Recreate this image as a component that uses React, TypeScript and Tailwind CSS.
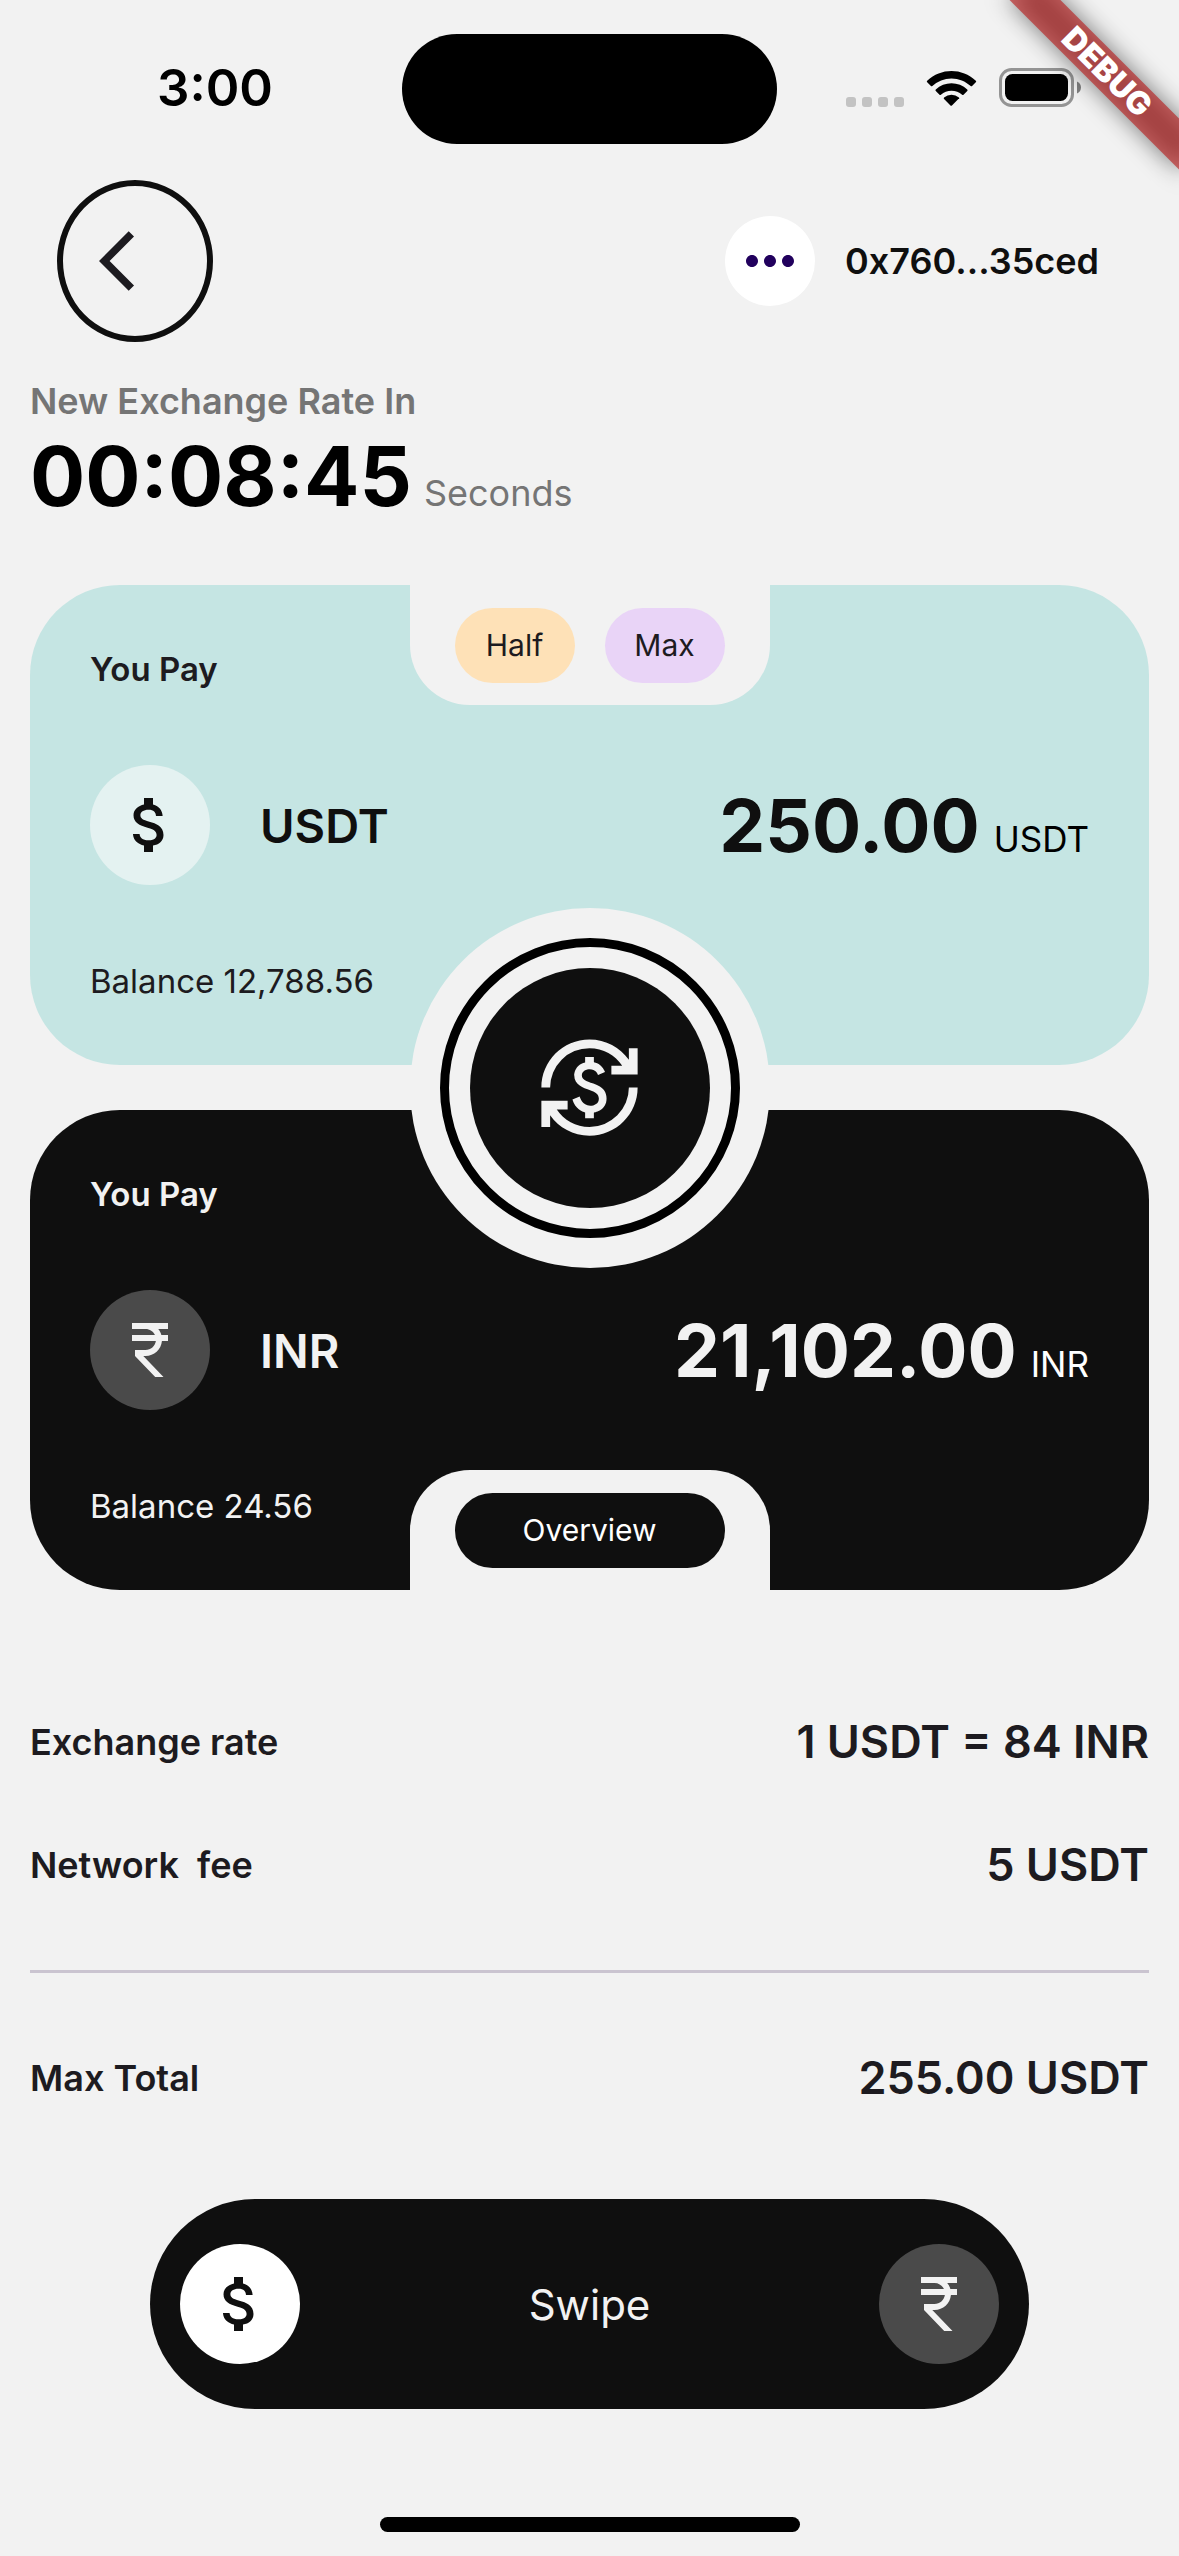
import type { ReactNode } from "react";
import {
  MdArrowBackIos,
  MdAttachMoney,
  MdCurrencyExchange,
  MdCurrencyRupee,
  MdMoreHoriz,
} from "react-icons/md";

function SignalDots() {
  return (
    <div className="flex gap-1.5">
      {[0, 1, 2, 3].map((i) => (
        <span key={i} className="size-2.5 rounded-[3px] bg-[#c3c3c3]" />
      ))}
    </div>
  );
}

function WifiIcon() {
  return (
    <svg viewBox="0 0 17 12" className="h-9 w-[51px]" fill="#000" aria-hidden="true">
      <path d="M8.5 2.46c2.38 0 4.67.92 6.39 2.56.13.13.34.12.47 0l1.24-1.26a.34.34 0 0 0 0-.49c-4.53-4.36-11.67-4.36-16.2 0a.34.34 0 0 0 0 .49L1.64 5.02c.13.13.34.13.47 0A9.26 9.26 0 0 1 8.5 2.46Z" />
      <path d="M8.5 6.55c1.31 0 2.57.49 3.54 1.37.13.13.34.12.47 0l1.24-1.26a.35.35 0 0 0 0-.5 7.64 7.64 0 0 0-10.49 0 .35.35 0 0 0 0 .5l1.24 1.26c.13.12.34.13.47 0A5.27 5.27 0 0 1 8.5 6.55Z" />
      <path d="M10.98 9.3a.34.34 0 0 0-.01-.5 3.83 3.83 0 0 0-4.94 0 .34.34 0 0 0-.01.5l2.14 2.17c.13.13.34.13.48 0l2.14-2.17Z" />
    </svg>
  );
}

function BatteryIcon() {
  return (
    <svg viewBox="0 0 82 39" className="h-[39px] w-[82px]" aria-hidden="true">
      <rect x="1.5" y="1.5" width="72" height="36" rx="11" fill="none" stroke="#949494" strokeWidth="3" />
      <rect x="6" y="6" width="63" height="27" rx="7.5" fill="#000" />
      <path d="M78 13.5v12c2.400-1 4-3.300 4-6s-1.600-5-4-6Z" fill="#808080" />
    </svg>
  );
}

function StatusBar() {
  return (
    <div className="grid grid-cols-[1fr_375px_1fr] items-center py-[34px]">
      <div className="flex justify-center pb-1 pl-7 text-[51px] leading-none font-semibold text-black">
        3:00
      </div>
      <div className="h-[110px] rounded-full bg-black" />
      <div className="flex items-end justify-end gap-[22px] pr-[98px] pb-1">
        <SignalDots />
        <WifiIcon />
        <BatteryIcon />
      </div>
    </div>
  );
}

function DebugRibbon() {
  return (
    <div className="pointer-events-none absolute top-0 right-0 size-[220px] overflow-hidden">
      <div className="absolute top-[54px] -right-12 h-9 w-60 rotate-45">
        <div className="absolute inset-0 bg-black/50 blur-[12px]" />
        <div className="absolute inset-0 flex items-center justify-center bg-[#b71c1c]/63 text-[32px] leading-none font-black text-white">
          DEBUG
        </div>
      </div>
    </div>
  );
}

function Coin({ className, children }: { className: string; children: ReactNode }) {
  return (
    <span className={`flex size-[120px] shrink-0 items-center justify-center rounded-full ${className}`}>
      {children}
    </span>
  );
}

type CurrencyCardProps = {
  tone: string;
  coin: ReactNode;
  code: string;
  codeTone: string;
  amount: string;
  unitTone: string;
  balance: string;
  children: ReactNode;
};

function CurrencyCard({ tone, coin, code, codeTone, amount, unitTone, balance, children }: CurrencyCardProps) {
  return (
    <section className={`relative flex flex-col gap-[72px] rounded-[90px] p-[60px] ${tone}`}>
      <h2 className="text-[33px] leading-[48px] font-semibold">You Pay</h2>
      <div className="flex items-center">
        {coin}
        <span className={`ml-[50px] text-[47px] leading-none font-semibold ${codeTone}`}>{code}</span>
        <div className="ml-auto flex items-baseline gap-3.5">
          <span className={`text-[73px] leading-none font-bold ${codeTone}`}>{amount}</span>
          <span className={`text-[35px] leading-none ${unitTone}`}>{code}</span>
        </div>
      </div>
      <p className="text-[33px] leading-[48px]">Balance {balance}</p>
      {children}
    </section>
  );
}

function DetailRow({ label, value }: { label: string; value: string }) {
  return (
    <div className="flex items-center justify-between text-[#1d1b20]">
      <dt className="text-[36px] leading-[60px] font-semibold whitespace-pre">{label}</dt>
      <dd className="text-[45px] leading-[60px] font-semibold">{value}</dd>
    </div>
  );
}

export default function App() {
  return (
    <div className="relative flex min-h-screen flex-col overflow-hidden bg-[#f2f2f2] font-['Inter',sans-serif] [font-optical-sizing:none]">
      <StatusBar />

      <header className="mt-0.5 flex items-center justify-between pr-[60px] pl-[57px]">
        <button
          type="button"
          aria-label="Back"
          className="flex h-[162px] w-[156px] items-center justify-center rounded-[50%] border-[6px] border-[#0f0f0f] text-[#1d1b20]"
        >
          <MdArrowBackIos size={72} />
        </button>
        <div className="flex items-center gap-[30px]">
          <button
            type="button"
            aria-label="More options"
            className="flex size-[90px] items-center justify-center rounded-full bg-white text-[#21005d]"
          >
            <MdMoreHoriz size={72} />
          </button>
          <span className="min-w-[274px] text-[36px] leading-[48px] font-semibold text-[#0f0f0f]">
            0x760...35ced
          </span>
        </div>
      </header>

      <main className="flex flex-col px-[30px]">
        <p className="mt-[35px] text-[36px] leading-[48px] font-semibold text-[#757575]">New Exchange Rate In</p>
        <div className="mt-1 flex items-baseline gap-3">
          <span className="text-[82px] leading-[96px] font-bold text-black">00:08:45</span>
          <span className="text-[36px] text-[#757575]">Seconds</span>
        </div>

        <div className="relative mt-[60px] flex flex-col gap-[45px]">
          <CurrencyCard
            tone="bg-[#c5e5e3] text-[#1d1b20]"
            coin={
              <Coin className="bg-[#e4f2f1] text-[#0f0f0f]">
                <MdAttachMoney size={72} />
              </Coin>
            }
            code="USDT"
            codeTone="text-[#0f0f0f]"
            amount="250.00"
            unitTone="text-black"
            balance="12,788.56"
          >
            <div className="absolute top-0 left-1/2 flex h-[120px] w-[360px] -translate-x-1/2 items-center justify-center gap-[30px] rounded-b-[60px] bg-[#f2f2f2]">
              <button type="button" className="h-[75px] w-[120px] rounded-full bg-[#fee1b7] text-[30px]">
                Half
              </button>
              <button type="button" className="h-[75px] w-[120px] rounded-full bg-[#e9d4f7] text-[30px]">
                Max
              </button>
            </div>
          </CurrencyCard>

          <CurrencyCard
            tone="bg-[#0f0f0f] text-[#f2f2f2]"
            coin={
              <Coin className="bg-[#4a4a4a] text-[#f2f2f2]">
                <MdCurrencyRupee size={72} />
              </Coin>
            }
            code="INR"
            codeTone="text-[#f2f2f2]"
            amount="21,102.00"
            unitTone="text-white"
            balance="24.56"
          >
            <div className="absolute bottom-0 left-1/2 flex h-[120px] w-[360px] -translate-x-1/2 items-center justify-center rounded-t-[60px] bg-[#f2f2f2]">
              <button type="button" className="h-[75px] w-[270px] rounded-full bg-[#0f0f0f] text-[30px] text-white">
                Overview
              </button>
            </div>
          </CurrencyCard>

          <div className="absolute top-1/2 left-1/2 flex size-[360px] -translate-x-1/2 -translate-y-1/2 items-center justify-center rounded-full bg-[#f2f2f2]">
            <div className="flex size-[300px] items-center justify-center rounded-full border-[9px] border-black">
              <button
                type="button"
                aria-label="Swap currencies"
                className="flex size-60 items-center justify-center rounded-full bg-[#0f0f0f] text-[#f2f2f2]"
              >
                <MdCurrencyExchange size={105} />
              </button>
            </div>
          </div>
        </div>

        <dl className="mt-[122px] flex flex-col gap-[63px]">
          <DetailRow label="Exchange rate" value="1 USDT = 84 INR" />
          <DetailRow label="Network  fee" value="5 USDT" />
        </dl>
        <hr className="my-[75px] border-t-[3px] border-[#cac4d0]" />
        <dl>
          <DetailRow label="Max Total" value="255.00 USDT" />
        </dl>

        <button
          type="button"
          className="mx-[120px] mt-[91px] flex items-center justify-between rounded-full bg-[#0f0f0f] px-[30px] py-[45px] text-[#f2f2f2]"
        >
          <Coin className="bg-white text-[#0f0f0f]">
            <MdAttachMoney size={72} />
          </Coin>
          <span className="text-[42px]">Swipe</span>
          <Coin className="bg-[#4a4a4a]">
            <MdCurrencyRupee size={72} />
          </Coin>
        </button>
      </main>

      <div className="mx-auto mt-auto mb-6 h-[15px] w-[420px] rounded-full bg-black" />
      <DebugRibbon />
    </div>
  );
}
